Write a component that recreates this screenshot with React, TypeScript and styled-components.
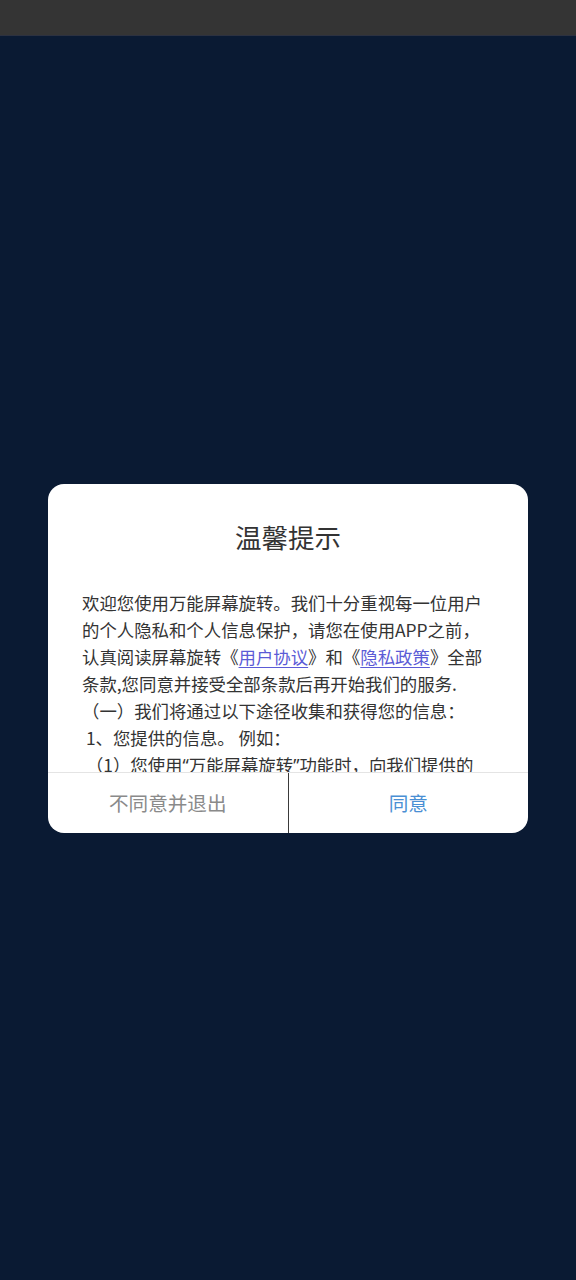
import React from 'react';
import styled, { createGlobalStyle } from 'styled-components';

const GlobalStyle = createGlobalStyle`
  html, body {
    margin: 0;
    padding: 0;
  }
  body {
    font-family: "Noto Sans CJK SC", "Noto Sans", sans-serif;
    background: #0a1a33;
  }
`;

const Screen = styled.div`
  width: 576px;
  height: 1280px;
  display: flex;
  flex-direction: column;
  background: #0a1a33;
`;

const StatusBar = styled.div`
  height: 35px;
  background: #343434;
  border-bottom: 1px solid #2c3140;
  flex-shrink: 0;
`;

const Stage = styled.div`
  flex: 1;
  display: flex;
  align-items: center;
  justify-content: center;
`;

const Dialog = styled.div`
  width: 480px;
  height: 349px;
  background: #fff;
  border-radius: 16px;
  overflow: hidden;
  display: flex;
  flex-direction: column;
`;

const Title = styled.h2`
  margin: 0;
  padding-top: 35px;
  font-size: 26.5px;
  line-height: 36px;
  font-weight: 400;
  color: #333;
  text-align: center;
`;

const Body = styled.div`
  flex: 1;
  overflow: hidden;
  margin-top: 34px;
  padding: 0 30px 0 34px;
  font-size: 17.4px;
  line-height: 27px;
  color: #333;
  white-space: nowrap;
`;

const Link = styled.a`
  color: #5b5bd6;
  text-decoration: underline;
  text-underline-offset: 3px;
  text-decoration-thickness: 1px;
`;

// narrow Latin quotes, as the device font draws them
const Quote = styled.span`
  font-family: "Noto Sans", sans-serif;
`;

const Actions = styled.div`
  height: 60px;
  flex-shrink: 0;
  display: flex;
  border-top: 1px solid #e4e4e4;
`;

const Action = styled.button<{ $primary?: boolean }>`
  flex: 1;
  border: none;
  background: transparent;
  font-family: inherit;
  font-size: 19.6px;
  color: ${(p) => (p.$primary ? '#4a8fd4' : '#8a8a8a')};
  padding: 0;
  cursor: pointer;

  & + & {
    border-left: 1px solid #3a3a3a;
  }
`;

const App = () => (
  <>
    <GlobalStyle />
    <Screen>
      <StatusBar />
      <Stage>
        <Dialog>
          <Title>温馨提示</Title>
          <Body>
            欢迎您使用万能屏幕旋转。我们十分重视每一位用户
            <br />
            的个人隐私和个人信息保护，请您在使用APP之前，
            <br />
            认真阅读屏幕旋转《<Link>用户协议</Link>》和《<Link>隐私政策</Link>》全部
            <br />
            条款,您同意并接受全部条款后再开始我们的服务.
            <br />
            （一）我们将通过以下途径收集和获得您的信息：
            <br />
            &nbsp;1、您提供的信息。 例如：
            <br />
            &nbsp;（1）您使用<Quote>“</Quote>万能屏幕旋转<Quote>”</Quote>功能时，向我们提供的
          </Body>
          <Actions>
            <Action>不同意并退出</Action>
            <Action $primary>同意</Action>
          </Actions>
        </Dialog>
      </Stage>
    </Screen>
  </>
);

export default App;
